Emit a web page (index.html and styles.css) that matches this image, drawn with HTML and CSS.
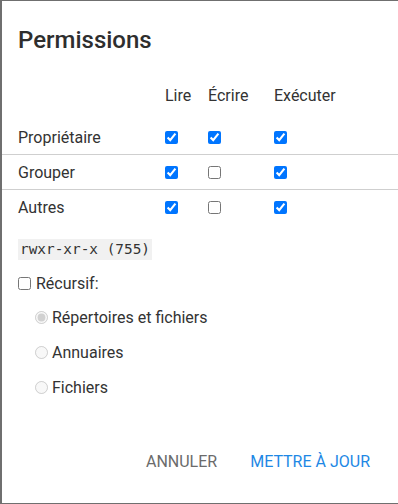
FILE: index.html
```html
<!DOCTYPE html>
<html lang="fr">
<head>
  <meta charset="UTF-8">
  <title>Permissions</title>
  <link rel="stylesheet" href="styles.css">
</head>
<body>
  <div class="dialog">
    <h2 class="title">Permissions</h2>

    <div class="perms">
      <div class="row head">
        <span></span>
        <span>Lire</span>
        <span>Écrire</span>
        <span>Exécuter</span>
      </div>
      <div class="row">
        <span class="who">Propriétaire</span>
        <span><input type="checkbox" checked></span>
        <span><input type="checkbox" checked></span>
        <span><input type="checkbox" checked></span>
      </div>
      <div class="row">
        <span class="who">Grouper</span>
        <span><input type="checkbox" checked></span>
        <span><input type="checkbox"></span>
        <span><input type="checkbox" checked></span>
      </div>
      <div class="row last">
        <span class="who">Autres</span>
        <span><input type="checkbox" checked></span>
        <span><input type="checkbox"></span>
        <span><input type="checkbox" checked></span>
      </div>
    </div>

    <div class="mode"><code>rwxr-xr-x (755)</code></div>

    <label class="recursive"><input type="checkbox"> Récursif:</label>

    <div class="targets">
      <label class="opt"><input type="radio" name="cible" checked disabled> Répertoires et fichiers</label>
      <label class="opt"><input type="radio" name="cible" disabled> Annuaires</label>
      <label class="opt"><input type="radio" name="cible" disabled> Fichiers</label>
    </div>

    <div class="actions">
      <button class="btn cancel">Annuler</button>
      <button class="btn ok">Mettre à jour</button>
    </div>
  </div>
</body>
</html>
```

FILE: styles.css
```css
* { box-sizing: border-box; }

body {
  margin: 0;
  background-color: #6f6f6f;
  font-family: Roboto, "Noto Sans", sans-serif;
  color: #333;
}

.dialog {
  margin: 1px 0 0 2px;
  width: 396px;
  height: 502px;
  background: #fff;
  display: flex;
  flex-direction: column;
}

.title {
  margin: 0;
  padding: 23px 16px 0;
  font-size: 24px;
  font-weight: 500;
  line-height: 32px;
  color: #2e2e2e;
}

.perms {
  margin-top: 30px;
}

.row {
  display: grid;
  grid-template-columns: 147px 43px 66px 1fr;
  align-items: center;
  height: 35px;
  padding-left: 16px;
  font-size: 16px;
  border-bottom: 1px solid #cfcfcf;
}

.row.head {
  height: 34px;
  border-bottom: none;
  align-items: start;
}

.row.last {
  border-bottom: none;
}

.row span {
  display: flex;
  align-items: center;
}

.row input {
  margin: 0;
  width: 13px;
  height: 13px;
}

.mode {
  margin-top: 14px;
  padding-left: 16px;
}

.mode code {
  display: inline-block;
  font-family: "DejaVu Sans Mono", monospace;
  font-size: 14.4px;
  line-height: 17px;
  padding: 2px 2px;
  background: #f1f1f1;
  color: #333;
}

.recursive {
  display: flex;
  align-items: center;
  gap: 5px;
  margin: 14px 0 0 16px;
  font-size: 16px;
  height: 19px;
}

.recursive input {
  margin: 0;
}

.targets {
  display: flex;
  flex-direction: column;
  margin: 15px 0 0 33px;
  gap: 16px;
}

.opt {
  display: flex;
  align-items: center;
  gap: 4px;
  font-size: 16px;
  height: 19px;
}

.opt input {
  margin: 0;
}

.actions {
  margin-top: auto;
  display: flex;
  justify-content: flex-end;
  gap: 1px;
  padding: 0 12px 24px 0;
}

.btn {
  background: transparent;
  border: none;
  font-family: Roboto, "Noto Sans", sans-serif;
  font-size: 16px;
  text-transform: uppercase;
  padding: 8px 16px;
  cursor: pointer;
}

.cancel { color: #6b6b6b; }
.ok { color: #1e88e5; }
```
